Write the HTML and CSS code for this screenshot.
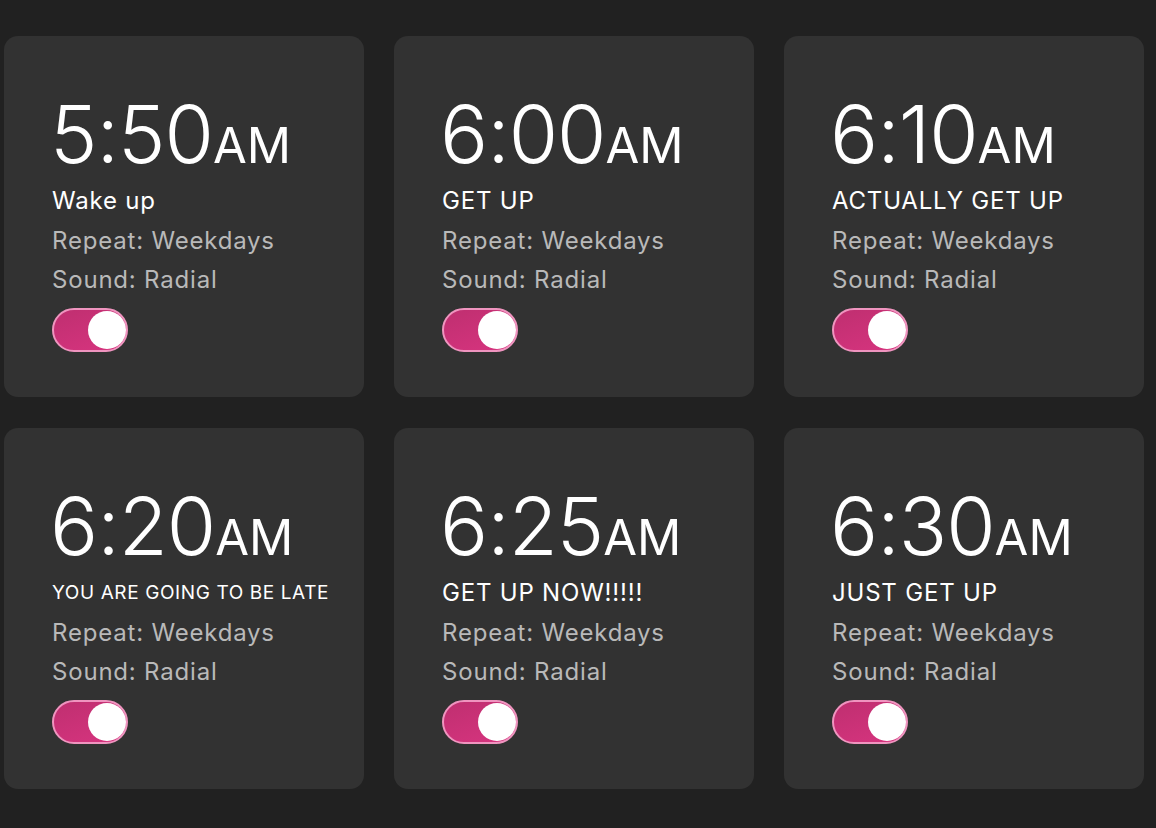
FILE: index.html
```
<!DOCTYPE html>
<html lang="en">
<head>
    <meta charset="UTF-8">

    <title>Alarms</title>

    <link rel="stylesheet" href="styles.css">
</head>
<body>
    <div id="alarms" class="alarm-grid">
        <div class="alarm">
            <div class="alarm-time">5:50<span>AM</span></div>
            <div class="alarm-title">Wake up</div>
            <div class="alarm-info">Repeat: Weekdays</div>
            <div class="alarm-info">Sound: Radial</div>
            <div class="toggle on"><span class="toggle-knob"></span></div>
        </div>
        <div class="alarm">
            <div class="alarm-time">6:00<span>AM</span></div>
            <div class="alarm-title">GET UP</div>
            <div class="alarm-info">Repeat: Weekdays</div>
            <div class="alarm-info">Sound: Radial</div>
            <div class="toggle on"><span class="toggle-knob"></span></div>
        </div>
        <div class="alarm">
            <div class="alarm-time">6:10<span>AM</span></div>
            <div class="alarm-title">ACTUALLY GET UP</div>
            <div class="alarm-info">Repeat: Weekdays</div>
            <div class="alarm-info">Sound: Radial</div>
            <div class="toggle on"><span class="toggle-knob"></span></div>
        </div>
        <div class="alarm">
            <div class="alarm-time">6:20<span>AM</span></div>
            <div class="alarm-title small">YOU ARE GOING TO BE LATE</div>
            <div class="alarm-info">Repeat: Weekdays</div>
            <div class="alarm-info">Sound: Radial</div>
            <div class="toggle on"><span class="toggle-knob"></span></div>
        </div>
        <div class="alarm">
            <div class="alarm-time">6:25<span>AM</span></div>
            <div class="alarm-title">GET UP NOW!!!!!</div>
            <div class="alarm-info">Repeat: Weekdays</div>
            <div class="alarm-info">Sound: Radial</div>
            <div class="toggle on"><span class="toggle-knob"></span></div>
        </div>
        <div class="alarm">
            <div class="alarm-time">6:30<span>AM</span></div>
            <div class="alarm-title">JUST GET UP</div>
            <div class="alarm-info">Repeat: Weekdays</div>
            <div class="alarm-info">Sound: Radial</div>
            <div class="toggle on"><span class="toggle-knob"></span></div>
        </div>
    </div>
</body>
</html>
```

FILE: styles.css
```
html,body{
    width: 100%;
    height: 100%;
    margin: 0;
}
body{
    background-color: #212121;
    font-family: Inter, "Noto Sans", sans-serif;
    color: #fff;
}
.alarm-grid{
    display: grid;
    grid-template-columns: repeat(3, 360px);
    column-gap: 30px;
    row-gap: 31px;
    padding: 36px 0 0 4px;
}
.alarm{
    box-sizing: border-box;
    height: 361px;
    padding: 58px 48px 0;
    border-radius: 14px;
    background-color: #323232;
}
.alarm-time{
    height: 80px;
    margin-left: -2px;
    font-size: 80px;
    line-height: 80px;
    font-weight: 300;
    letter-spacing: -1px;
}
.alarm-time span{
    font-size: 49px;
    font-weight: 400;
    letter-spacing: 0;
}
.alarm-title{
    margin-top: 7px;
    font-size: 24px;
    line-height: 40px;
    letter-spacing: 0.8px;
    white-space: nowrap;
}
.alarm-title.small{
    font-size: 19px;
    letter-spacing: 0.6px;
}
.alarm-info{
    font-size: 24px;
    line-height: 39px;
    letter-spacing: 0.8px;
    color: #b9b9b9;
}
.toggle{
    position: relative;
    box-sizing: border-box;
    width: 76px;
    height: 44px;
    margin-top: 9px;
    border: 2px solid #ef94bf;
    border-radius: 22px;
    background-image: linear-gradient(160deg,#bf2f70,#d7347f);
}
.toggle-knob{
    position: absolute;
    top: 1px;
    right: 0;
    width: 38px;
    height: 38px;
    border-radius: 50%;
    background-color: #fff;
}
```
